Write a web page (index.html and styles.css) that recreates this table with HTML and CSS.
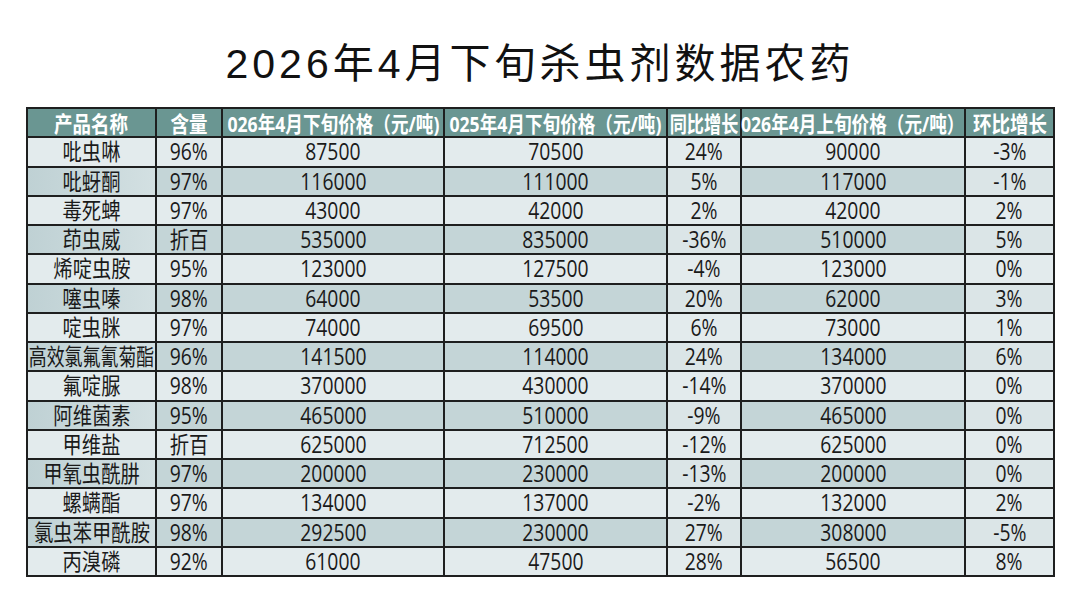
FILE: index.html
```html
<!DOCTYPE html>
<html lang="zh-CN">
<head>
<meta charset="utf-8">
<title>2026年4月下旬杀虫剂数据农药</title>
<link rel="stylesheet" href="styles.css">
</head>
<body>
<h1 class="title">2026年4月下旬杀虫剂数据农药</h1>
<div class="grid">
  <div class="row head">
    <div class="c"><span>产品名称</span></div>
    <div class="c"><span>含量</span></div>
    <div class="c long"><span>026年4月下旬价格（元/吨)</span></div>
    <div class="c long"><span>025年4月下旬价格（元/吨)</span></div>
    <div class="c tight"><span>同比增长</span></div>
    <div class="c long"><span>026年4月上旬价格（元/吨）</span></div>
    <div class="c"><span>环比增长</span></div>
  </div>
  <div class="row"><div class="c"><span>吡虫啉</span></div><div class="c"><span>96%</span></div><div class="c"><span>87500</span></div><div class="c"><span>70500</span></div><div class="c pct"><span>24%</span></div><div class="c"><span>90000</span></div><div class="c pct"><span>-3%</span></div></div>
  <div class="row even"><div class="c name"><span>吡蚜酮</span></div><div class="c"><span>97%</span></div><div class="c"><span>116000</span></div><div class="c"><span>111000</span></div><div class="c pct"><span>5%</span></div><div class="c"><span>117000</span></div><div class="c pct"><span>-1%</span></div></div>
  <div class="row"><div class="c"><span>毒死蜱</span></div><div class="c"><span>97%</span></div><div class="c"><span>43000</span></div><div class="c"><span>42000</span></div><div class="c pct"><span>2%</span></div><div class="c"><span>42000</span></div><div class="c pct"><span>2%</span></div></div>
  <div class="row even"><div class="c name"><span>茚虫威</span></div><div class="c"><span>折百</span></div><div class="c"><span>535000</span></div><div class="c"><span>835000</span></div><div class="c pct"><span>-36%</span></div><div class="c"><span>510000</span></div><div class="c pct"><span>5%</span></div></div>
  <div class="row"><div class="c"><span>烯啶虫胺</span></div><div class="c"><span>95%</span></div><div class="c"><span>123000</span></div><div class="c"><span>127500</span></div><div class="c pct"><span>-4%</span></div><div class="c"><span>123000</span></div><div class="c pct"><span>0%</span></div></div>
  <div class="row even"><div class="c name"><span>噻虫嗪</span></div><div class="c"><span>98%</span></div><div class="c"><span>64000</span></div><div class="c"><span>53500</span></div><div class="c pct"><span>20%</span></div><div class="c"><span>62000</span></div><div class="c pct"><span>3%</span></div></div>
  <div class="row"><div class="c"><span>啶虫脒</span></div><div class="c"><span>97%</span></div><div class="c"><span>74000</span></div><div class="c"><span>69500</span></div><div class="c pct"><span>6%</span></div><div class="c"><span>73000</span></div><div class="c pct"><span>1%</span></div></div>
  <div class="row even"><div class="c name tight"><span>高效氯氟氰菊酯</span></div><div class="c"><span>96%</span></div><div class="c"><span>141500</span></div><div class="c"><span>114000</span></div><div class="c pct"><span>24%</span></div><div class="c"><span>134000</span></div><div class="c pct"><span>6%</span></div></div>
  <div class="row"><div class="c"><span>氟啶脲</span></div><div class="c"><span>98%</span></div><div class="c"><span>370000</span></div><div class="c"><span>430000</span></div><div class="c pct"><span>-14%</span></div><div class="c"><span>370000</span></div><div class="c pct"><span>0%</span></div></div>
  <div class="row even"><div class="c name"><span>阿维菌素</span></div><div class="c"><span>95%</span></div><div class="c"><span>465000</span></div><div class="c"><span>510000</span></div><div class="c pct"><span>-9%</span></div><div class="c"><span>465000</span></div><div class="c pct"><span>0%</span></div></div>
  <div class="row"><div class="c"><span>甲维盐</span></div><div class="c"><span>折百</span></div><div class="c"><span>625000</span></div><div class="c"><span>712500</span></div><div class="c pct"><span>-12%</span></div><div class="c"><span>625000</span></div><div class="c pct"><span>0%</span></div></div>
  <div class="row even"><div class="c name"><span>甲氧虫酰肼</span></div><div class="c"><span>97%</span></div><div class="c"><span>200000</span></div><div class="c"><span>230000</span></div><div class="c pct"><span>-13%</span></div><div class="c"><span>200000</span></div><div class="c pct"><span>0%</span></div></div>
  <div class="row"><div class="c"><span>螺螨酯</span></div><div class="c"><span>97%</span></div><div class="c"><span>134000</span></div><div class="c"><span>137000</span></div><div class="c pct"><span>-2%</span></div><div class="c"><span>132000</span></div><div class="c pct"><span>2%</span></div></div>
  <div class="row even"><div class="c name"><span>氯虫苯甲酰胺</span></div><div class="c"><span>98%</span></div><div class="c"><span>292500</span></div><div class="c"><span>230000</span></div><div class="c pct"><span>27%</span></div><div class="c"><span>308000</span></div><div class="c pct"><span>-5%</span></div></div>
  <div class="row"><div class="c"><span>丙溴磷</span></div><div class="c"><span>92%</span></div><div class="c"><span>61000</span></div><div class="c"><span>47500</span></div><div class="c pct"><span>28%</span></div><div class="c"><span>56500</span></div><div class="c pct"><span>8%</span></div></div>
</div>
</body>
</html>
```

FILE: styles.css
```css
html, body {
  margin: 0;
  padding: 0;
  background: #ffffff;
}

body {
  font-family: "Open Sans", "Noto Sans CJK SC", sans-serif;
  color: #1a1a1a;
}

.title {
  margin: 40px 0 19px;
  text-align: center;
  font-family: "Liberation Sans", "Noto Sans CJK SC", sans-serif;
  font-weight: 400;
  font-size: 41px;
  line-height: 48px;
  letter-spacing: 4px;
  color: #111111;
}

.grid {
  display: grid;
  grid-template-columns: 127px 64px 220px 221px 72px 222px 87px;
  grid-auto-rows: 27.25px;
  gap: 2px;
  padding: 2px;
  margin-left: 26px;
  width: max-content;
  background: #1e1f1f;
}

.row {
  display: contents;
}

.c {
  display: flex;
  align-items: center;
  justify-content: center;
  min-width: 0;
  white-space: nowrap;
  background: #e3ebed;
  font-size: 23px;
  line-height: 1;
}

.c span {
  display: inline-block;
  flex: none;
  line-height: 1;
  transform: scaleX(0.84);
}

.c.tight span {
  transform: scaleX(0.78);
}

.head .c {
  background: #6a9692;
  color: #ffffff;
  font-weight: 700;
  font-size: 22px;
}

.head .c.long span {
  transform: scaleX(0.8);
}

.even .c {
  background: #c4d5d7;
}

.even .c.name {
  background: linear-gradient(to right, #bfd1d4, #d3e0e2);
}

.even .c.pct {
  background: #dbe5e7;
}
```
